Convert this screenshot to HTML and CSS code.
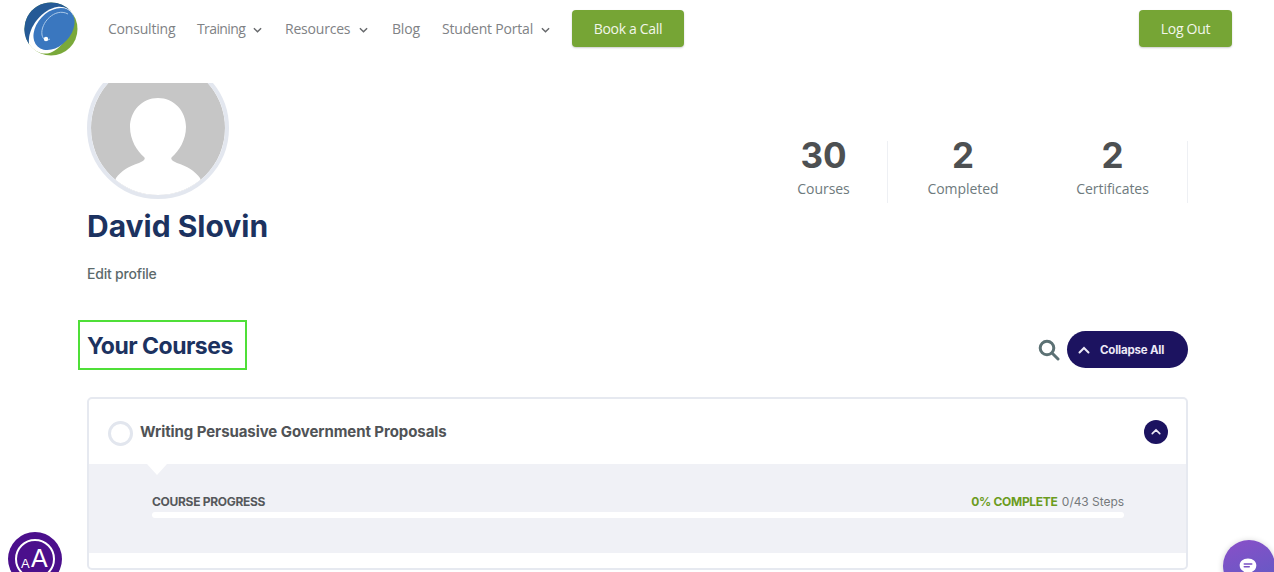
FILE: index.html
```html
<!DOCTYPE html>
<html lang="en">
<head>
    <meta charset="UTF-8">
    <meta name="viewport" content="width=device-width, initial-scale=1.0">
    <title>Student Portal</title>
    <link rel="stylesheet" href="styles.css">
</head>
<body>
    <!-- Site header -->
    <header class="site-header">
        <svg class="logo" viewBox="0 0 54 54">
            <circle cx="27" cy="27" r="26.5" fill="#7aa93a"/>
            <path d="M27 .5A26.5 26.5 0 0 0 5 42C6 28 20 5 47 9.500A26.500 26.500 0 0 0 27 .5Z" fill="#255a96"/>
            <path d="M5 42C10 50 20 54 28 50C38 45 51 30 49 12C46 7 40 4 33 5C20 7 3 24 5 42Z" fill="#fff"/>
            <ellipse cx="30" cy="27" rx="17" ry="24" transform="rotate(43 30 27)" fill="#3a77bf"/>
            <path d="M44 12C31 5 16 21 18 33C19 38 23 39 26 37" fill="none" stroke="#a9c8e8" stroke-width="1"/>
            <circle cx="22" cy="37" r="2.200" fill="#fff"/>
        </svg>
        <nav class="main-nav">
            <a href="#" class="nav-link nav-consulting">Consulting</a>
            <a href="#" class="nav-link nav-training">Training <svg class="caret" viewBox="0 0 10 6"><path d="M1 1l4 4 4-4"/></svg></a>
            <a href="#" class="nav-link nav-resources">Resources <svg class="caret" viewBox="0 0 10 6"><path d="M1 1l4 4 4-4"/></svg></a>
            <a href="#" class="nav-link nav-blog">Blog</a>
            <a href="#" class="nav-link nav-portal">Student Portal <svg class="caret" viewBox="0 0 10 6"><path d="M1 1l4 4 4-4"/></svg></a>
            <a href="#" class="green-btn book-btn">Book a Call</a>
        </nav>
        <a href="#" class="green-btn logout-btn">Log Out</a>
    </header>

    <main class="content">
        <!-- Profile -->
        <section class="profile">
            <div class="profile-info">
                <div class="avatar-clip">
                    <svg class="avatar" viewBox="0 0 142 142">
                        <defs><clipPath id="avatarCircle"><circle cx="71" cy="71" r="67"/></clipPath></defs>
                        <circle cx="71" cy="71" r="67" fill="#c6c6c6"/>
                        <g clip-path="url(#avatarCircle)">
                            <path d="M71 41C87 41 99 54 99 70C99 83 92 94 85 100C83 102 85 104 90 106C100 109 108 114 113 121L120 142H22L29 121C34 114 42 109 52 106C57 104 59 102 57 100C50 94 43 83 43 70C43 54 55 41 71 41Z" fill="#fff"/>
                        </g>
                        <circle cx="71" cy="71" r="69" fill="none" stroke="#e3e7ef" stroke-width="4"/>
                    </svg>
                </div>
                <h1 class="profile-name">David Slovin</h1>
                <a href="#" class="edit-link">Edit profile</a>
            </div>
            <div class="stats">
                <div class="stat stat-first"><strong>30</strong><span>Courses</span></div>
                <div class="stat stat-middle"><strong>2</strong><span>Completed</span></div>
                <div class="stat stat-last"><strong>2</strong><span>Certificates</span></div>
            </div>
        </section>

        <!-- Courses -->
        <section class="courses-head">
            <h2 class="courses-title">Your Courses</h2>
            <div class="courses-tools">
                <svg class="search-icon" viewBox="0 0 22 22"><circle cx="9" cy="9" r="6.800"/><path d="M14 14l6 6"/></svg>
                <button class="collapse-btn" type="button">
                    <svg class="chev" viewBox="0 0 12 8"><path d="M1.500 6.500L6 2l4.500 4.500"/></svg>
                    Collapse All
                </button>
            </div>
        </section>

        <article class="course-card">
            <div class="course-top">
                <span class="course-check"></span>
                <h3 class="course-name">Writing Persuasive Government Proposals</h3>
                <span class="course-toggle"><svg class="chev chev-small" viewBox="0 0 12 8"><path d="M1.500 6.500L6 2l4.500 4.500"/></svg></span>
            </div>
            <div class="course-body">
                <div class="progress-row">
                    <span class="progress-label">COURSE PROGRESS</span>
                    <span class="progress-stats"><b>0% COMPLETE</b> 0/43 Steps</span>
                </div>
                <div class="progress-bar"></div>
            </div>
        </article>
    </main>

    <!-- Floating widgets -->
    <div class="access-widget"><span class="access-ring"><i>A</i><em>A</em></span></div>
    <div class="chat-widget">
        <svg viewBox="0 0 24 24" class="chat-icon">
            <path d="M12 3c6 0 10 3.600 10 8.500S18 20 12 20l-5 3v-4.500C3.800 17 2 14.500 2 11.500 2 6.600 6 3 12 3Z" fill="#fff"/>
            <path d="M7.500 9.500h9M7.500 13h6" stroke="#7a50c4" stroke-width="1.800" stroke-linecap="round"/>
        </svg>
    </div>
</body>
</html>
```

FILE: styles.css
```css
/* styles.css */
* {
box-sizing: border-box;
}

html, body {
height: 572px;
overflow: hidden;
}

body {
margin: 0;
background-color: white;
font-family: Inter, "Liberation Sans", sans-serif;
color: #4a4d50;
position: relative;
}

a {
text-decoration: none;
}

/* header */
.site-header {
height: 83px;
padding: 2px 42px 0 24px;
display: flex;
align-items: flex-start;
}

.logo {
width: 54px;
height: 54px;
flex: none;
}

.main-nav {
display: flex;
align-items: center;
height: 37px;
margin-top: 8px;
margin-left: 30px;
}

.nav-link {
font-family: "Open Sans", sans-serif;
font-size: 14px;
color: #808285;
letter-spacing: -0.2px;
white-space: nowrap;
}

.nav-consulting { width: 89px; }
.nav-training { width: 88px; letter-spacing: -0.6px; }
.nav-resources { width: 107px; }
.nav-blog { width: 50px; }
.nav-portal { width: 130px; }

.caret {
width: 9px;
height: 6px;
margin-left: 5px;
vertical-align: 1px;
fill: none;
stroke: #66686b;
stroke-width: 1.600;
}

.green-btn {
display: flex;
align-items: center;
justify-content: center;
height: 37px;
background-color: #76a535;
color: #f2f6ea;
font-family: "Open Sans", sans-serif;
font-size: 14px;
letter-spacing: -0.3px;
border-radius: 4px;
box-shadow: 0 1px 2px rgba(0, 0, 0, 0.2);
}

.book-btn {
width: 112px;
}

.logout-btn {
width: 93px;
margin-top: 8px;
margin-left: auto;
}

/* page content */
.content {
padding: 0 86px 0 87px;
}

.profile {
display: flex;
justify-content: space-between;
height: 237px;
}

.avatar-clip {
width: 142px;
height: 116px;
overflow: hidden;
}

.avatar {
display: block;
width: 142px;
height: 142px;
margin-top: -26px;
}

.profile-name {
margin: 9px 0 0;
font-size: 30px;
line-height: 36px;
font-weight: 700;
letter-spacing: 0;
color: #1c3260;
}

.edit-link {
display: block;
margin-top: 21px;
font-size: 14px;
line-height: 18px;
font-weight: 500;
letter-spacing: -0.2px;
color: #5c6a6c;
}

.stats {
display: flex;
height: 62px;
margin-top: 58px;
margin-right: 0;
}

.stat {
display: flex;
flex-direction: column;
align-items: center;
width: 150px;
}

.stat-first {
width: 128px;
border-right: 1px solid #eef0f4;
}

.stat-last {
border-right: 1px solid #eef0f4;
}

.stat strong {
font-size: 35px;
line-height: 30px;
margin-top: -1px;
font-weight: 700;
color: #4d5052;
}

.stat span {
margin-top: 10px;
font-family: "Open Sans", sans-serif;
font-size: 14px;
line-height: 18px;
letter-spacing: -0.05px;
color: #6e7a7d;
}

.courses-head {
display: flex;
justify-content: space-between;
height: 77px;
}

.courses-title {
margin: 0 0 0 -9px;
width: 169px;
height: 50px;
padding-left: 7px;
border: 2px solid #4fdf38;
font-size: 23px;
line-height: 48px;
font-weight: 700;
letter-spacing: -0.5px;
color: #1c3260;
}

.courses-tools {
display: flex;
align-items: center;
gap: 7px;
height: 37px;
margin-top: 11px;
}

.search-icon {
width: 22px;
height: 22px;
fill: none;
stroke: #5c7174;
stroke-width: 3;
stroke-linecap: round;
}

.collapse-btn {
display: flex;
align-items: center;
gap: 10px;
width: 121px;
height: 37px;
padding: 0 0 0 11px;
border: none;
border-radius: 19px;
background-color: #1c1360;
color: #ece9f6;
font-family: Inter, sans-serif;
font-size: 11.500px;
font-weight: 700;
letter-spacing: -0.2px;
}

.chev {
width: 12px;
height: 8px;
fill: none;
stroke: #ece9f6;
stroke-width: 2;
stroke-linecap: round;
}

.chev-small {
width: 10px;
height: 7px;
}

.course-card {
height: 173px;
border: 2px solid #e6e9f0;
border-radius: 5px;
overflow: hidden;
}

.course-top {
display: flex;
align-items: center;
height: 65px;
padding: 0 18px 0 19px;
}

.course-check {
width: 25px;
height: 25px;
border: 3.500px solid #e2e6ee;
border-radius: 50%;
margin-top: 3px;
}

.course-name {
margin: 0 0 0 7px;
font-size: 15px;
font-weight: 700;
letter-spacing: -0.07px;
color: #505356;
}

.course-toggle {
display: flex;
align-items: center;
justify-content: center;
width: 24px;
height: 24px;
margin-left: auto;
border-radius: 50%;
background-color: #1c1360;
}

.course-body {
position: relative;
height: 89px;
padding: 30px 62px 0 63px;
background-color: #f0f1f6;
}

/* little notch under the course title */
.course-body::before {
content: "";
position: absolute;
top: 0;
left: 58px;
border-left: 10px solid transparent;
border-right: 10px solid transparent;
border-top: 11px solid white;
}

.progress-row {
display: flex;
justify-content: space-between;
align-items: center;
height: 14px;
}

.progress-label {
font-size: 12px;
font-weight: 700;
letter-spacing: -0.3px;
color: #55585b;
}

.progress-stats {
font-size: 12px;
letter-spacing: -0.05px;
color: #75797c;
}

.progress-stats b {
color: #6c9c1e;
font-weight: 700;
letter-spacing: -0.3px;
margin-right: 1px;
}

.progress-bar {
height: 6px;
margin-top: 4px;
border-radius: 3px;
background-color: white;
}

/* floating widgets */
.access-widget {
position: absolute;
left: 8px;
top: 532px;
width: 54px;
height: 54px;
padding: 7px;
border-radius: 50%;
background-color: #4b0f8c;
}

.access-ring {
display: block;
position: relative;
width: 40px;
height: 40px;
border: 2px solid white;
border-radius: 50%;
color: white;
font-family: "Liberation Sans", sans-serif;
}

.access-ring i {
position: absolute;
left: 4px;
top: 16px;
font-style: normal;
font-size: 13px;
line-height: 14px;
}

.access-ring em {
position: absolute;
left: 14px;
top: 4px;
font-style: normal;
font-size: 25px;
line-height: 26px;
}

.chat-widget {
position: absolute;
left: 1223px;
top: 540px;
width: 52px;
height: 52px;
border-radius: 50%;
background: linear-gradient(160deg, #8a4fc8, #5c5cc4);
box-shadow: 0 1px 6px rgba(0, 0, 0, 0.2);
}

.chat-icon {
display: block;
width: 20px;
height: 20px;
margin: 16px 0 0 15px;
}
```
